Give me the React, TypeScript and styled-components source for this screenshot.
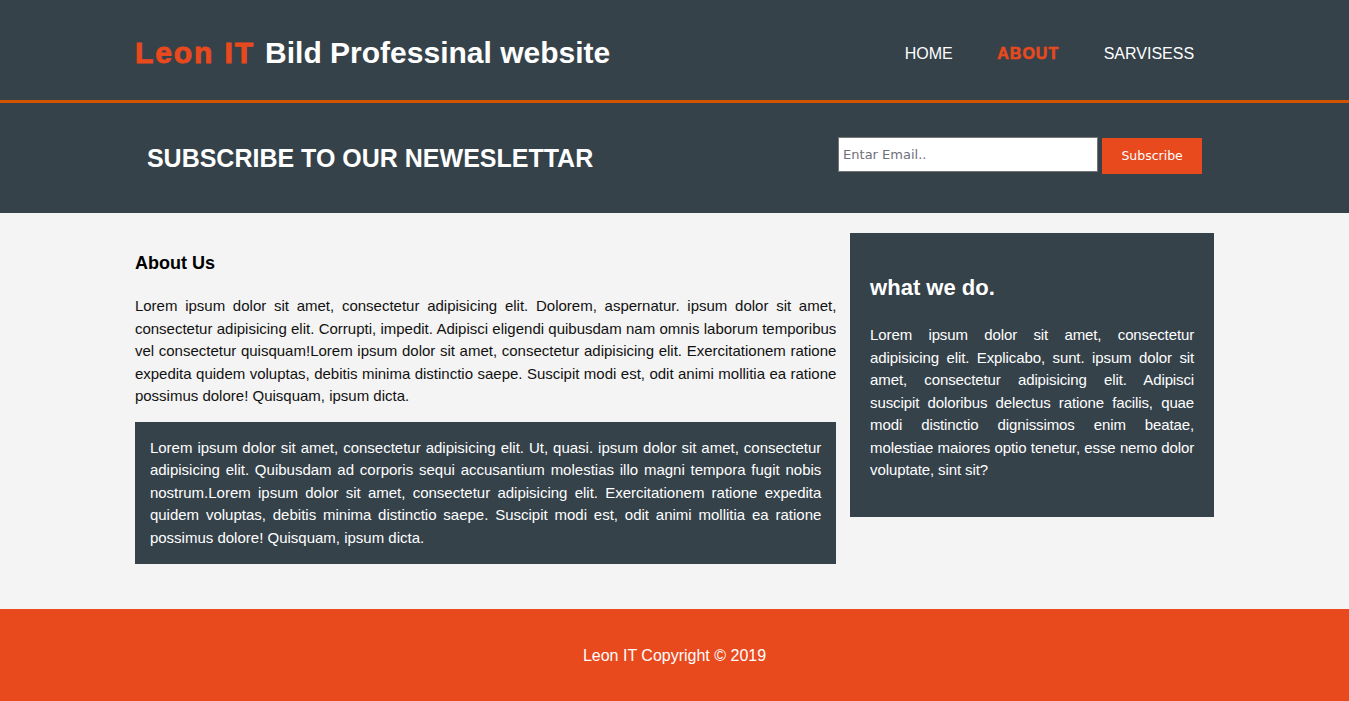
import React from 'react';
import styled, { createGlobalStyle } from 'styled-components';

const GlobalStyle = createGlobalStyle`
    body {
        margin: 0;
        padding: 0;
        font-family: "Liberation Sans", Arial, Helvetica, sans-serif;
        font-size: 15px;
        line-height: 1.5;
        background-color: #f4f4f4;
        color: #111;
    }
`

const Container = styled.div`
    width: 80%;
    margin: auto;
`

const Header = styled.header`
    background-color: #35424a;
    color: #ffffff;
    border-bottom: 3px solid #d35400;
`

const HeaderInner = styled(Container)`
    display: flex;
    align-items: center;
    justify-content: space-between;
    height: 100px;
`

const Branding = styled.h1`
    margin: 5px 0 0 0;
    font-size: 30px;
    line-height: 1.2;
    font-weight: bold;
    white-space: nowrap;
`

// the original renders this part in a black weight (Arial Black)
const Highlight = styled.span`
    color: #e8491d;
    letter-spacing: 1.9px;
    -webkit-text-stroke: 0.9px #e8491d;
`

const Nav = styled.ul`
    display: flex;
    align-items: center;
    gap: 4.5px;
    margin: 8px 0 0 0;
    padding: 0;
    list-style: none;
`

const NavLink = styled.a<{ $active?: boolean }>`
    display: block;
    padding: 0 20px;
    font-size: 16px;
    text-transform: uppercase;
    text-decoration: none;
    color: ${props => props.$active ? '#e8491d' : '#ffffff'};
    font-weight: ${props => props.$active ? 'bold' : 'normal'};
    letter-spacing: ${props => props.$active ? '1px' : '0'};
    -webkit-text-stroke: ${props => props.$active ? '0.6px #e8491d' : '0'};
`

const Newsletter = styled.section`
    background-color: #35424a;
    color: #ffffff;
`

const NewsletterInner = styled(Container)`
    display: flex;
    align-items: center;
    justify-content: space-between;
    height: 110px;
`

const NewsletterTitle = styled.h2`
    margin: 0;
    padding-left: 12px;
    font-size: 25px;
    font-weight: bold;
    line-height: 1.2;
`

const Form = styled.form`
    display: flex;
    align-items: center;
    gap: 4px;
    margin: 0 12px 7px 0;
`

const EmailInput = styled.input`
    box-sizing: border-box;
    width: 260px;
    height: 35px;
    padding: 4px;
    border: 1px solid #767676;
    font-family: "DejaVu Sans", Verdana, sans-serif;
    font-size: 13px;
    &::placeholder {
        color: #6f6f7a;
    }
`

const Button = styled.button`
    width: 100px;
    height: 36px;
    margin-top: 2px;
    border: 0;
    background-color: #e8491d;
    color: #ffffff;
    font-family: "DejaVu Sans", Verdana, sans-serif;
    font-size: 12.5px;
`

const Main = styled(Container)`
    display: flex;
    justify-content: space-between;
    align-items: flex-start;
    padding: 20px 0 45px 0;
`

const Article = styled.article`
    width: 65%;
`

const ArticleTitle = styled.h1`
    margin: 17px 0 18px 0;
    font-size: 18px;
    font-weight: bold;
    color: #000;
`

const Text = styled.p<{ $tight?: boolean }>`
    margin: 0;
    text-align: justify;
    letter-spacing: ${props => props.$tight ? '-0.11px' : '0'};
`

const DarkBox = styled.div`
    margin-top: 14px;
    padding: 15px 15px 15px 15px;
    background-color: #35424a;
    color: #ffffff;
`

const Sidebar = styled.aside`
    width: 324px;
    padding: 20px 20px 35px 20px;
    background-color: #35424a;
    color: #ffffff;
`

const SidebarTitle = styled.h3`
    margin: 18px 0 20px 0;
    font-size: 22px;
    font-weight: bold;
`

const Footer = styled.footer`
    padding: 35px 0 33px 0;
    background-color: #e8491d;
    color: #ffffff;
    text-align: center;
`

const FooterText = styled.p`
    margin: 0;
    font-size: 16px;
`

const App: React.FC = () => {
    return (
        <>
            <GlobalStyle />
            <Header>
                <HeaderInner>
                    <Branding><Highlight>Leon IT </Highlight>Bild Professinal website</Branding>
                    <Nav>
                        <li><NavLink href="#">Home</NavLink></li>
                        <li><NavLink href="#" $active>About</NavLink></li>
                        <li><NavLink href="#">Sarvisess</NavLink></li>
                    </Nav>
                </HeaderInner>
            </Header>

            <Newsletter>
                <NewsletterInner>
                    <NewsletterTitle>SUBSCRIBE TO OUR NEWESLETTAR</NewsletterTitle>
                    <Form onSubmit={e => e.preventDefault()}>
                        <EmailInput type="email" placeholder="Entar Email.." />
                        <Button type="submit">Subscribe</Button>
                    </Form>
                </NewsletterInner>
            </Newsletter>

            <Main>
                <Article>
                    <ArticleTitle>About Us</ArticleTitle>
                    <Text>
                        Lorem ipsum dolor sit amet, consectetur adipisicing elit. Dolorem, aspernatur. ipsum dolor sit amet, consectetur adipisicing elit. Corrupti, impedit. Adipisci eligendi quibusdam nam omnis laborum temporibus vel consectetur quisquam!Lorem ipsum dolor sit amet, consectetur adipisicing elit. Exercitationem ratione expedita quidem voluptas, debitis minima distinctio saepe. Suscipit modi est, odit animi mollitia ea ratione possimus dolore! Quisquam, ipsum dicta.
                    </Text>
                    <DarkBox>
                        <Text>
                            Lorem ipsum dolor sit amet, consectetur adipisicing elit. Ut, quasi. ipsum dolor sit amet, consectetur adipisicing elit. Quibusdam ad corporis sequi accusantium molestias illo magni tempora fugit nobis nostrum.Lorem ipsum dolor sit amet, consectetur adipisicing elit. Exercitationem ratione expedita quidem voluptas, debitis minima distinctio saepe. Suscipit modi est, odit animi mollitia ea ratione possimus dolore! Quisquam, ipsum dicta.
                        </Text>
                    </DarkBox>
                </Article>

                <Sidebar>
                    <SidebarTitle>what we do.</SidebarTitle>
                    <Text $tight>
                        Lorem ipsum dolor sit amet, consectetur adipisicing elit. Explicabo, sunt. ipsum dolor sit amet, consectetur adipisicing elit. Adipisci suscipit doloribus delectus ratione facilis, quae modi distinctio dignissimos enim beatae, molestiae maiores optio tenetur, esse nemo dolor voluptate, sint sit?
                    </Text>
                </Sidebar>
            </Main>

            <Footer>
                <FooterText>Leon IT Copyright &copy; 2019</FooterText>
            </Footer>
        </>
    );
}

export default App;
